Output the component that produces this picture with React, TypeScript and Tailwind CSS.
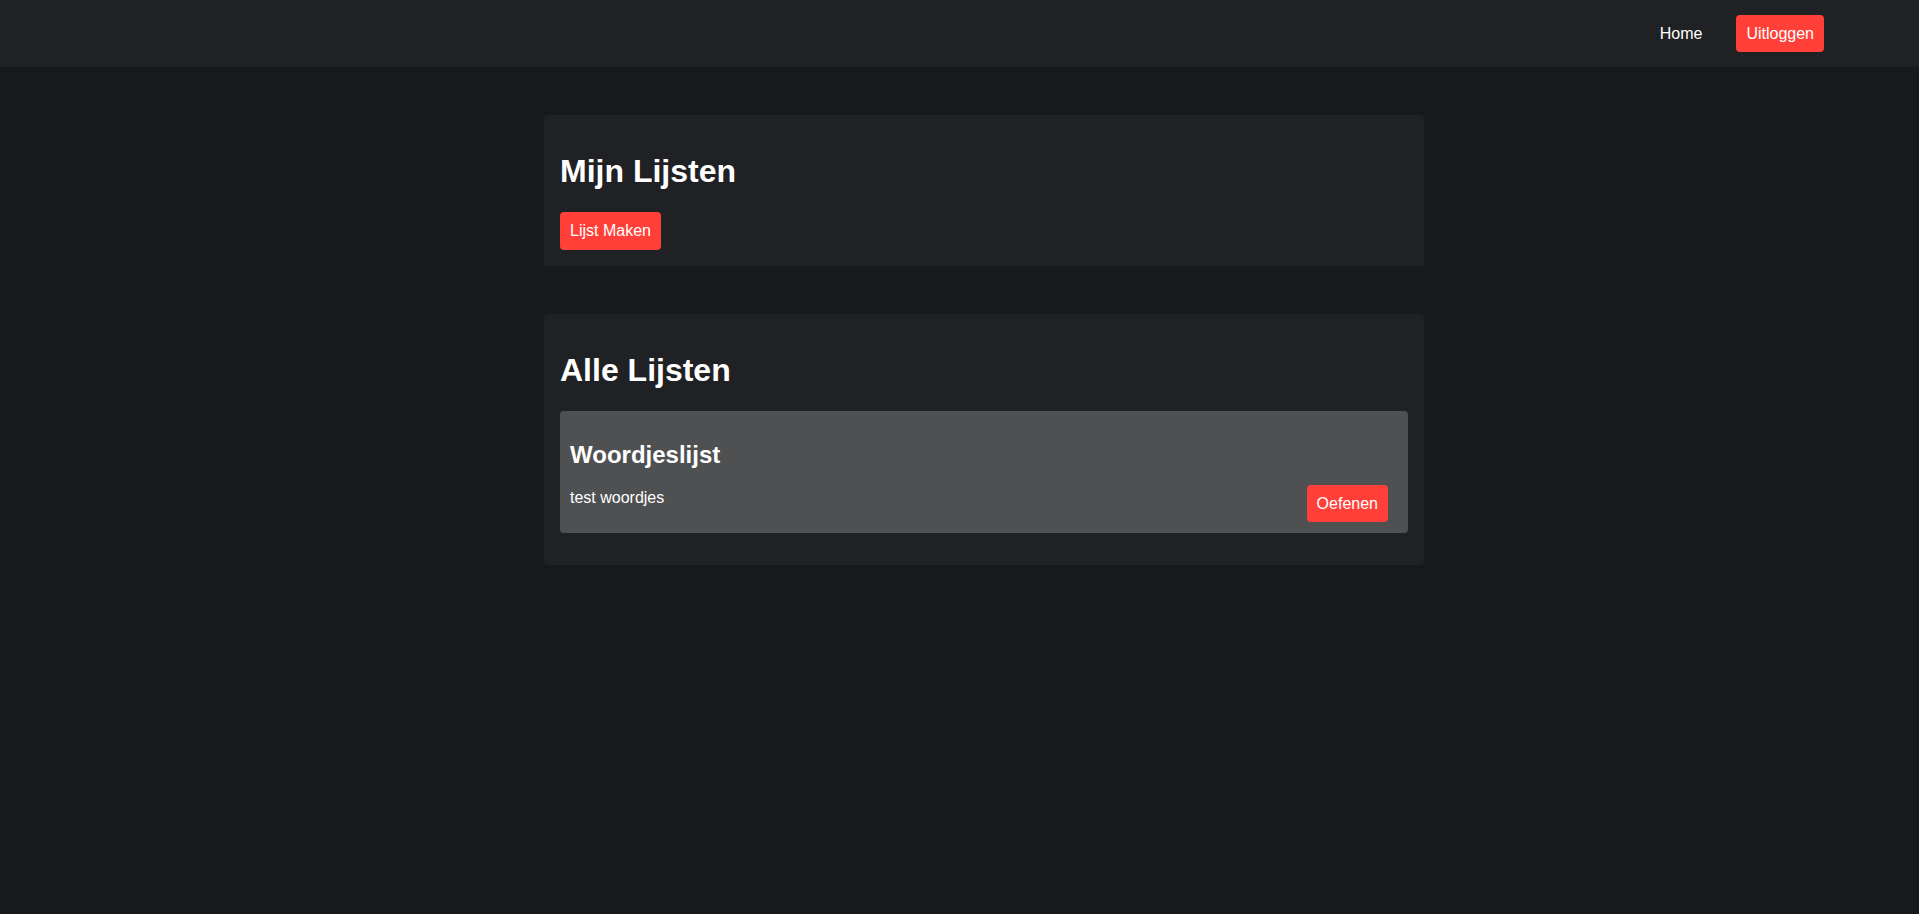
export default function App() {
  const lists = [{ title: "Woordjeslijst", desc: "test woordjes" }];

  return (
    <div className="min-h-[914px] bg-[#18191b] text-white font-['Liberation_Sans',Arial,sans-serif]">
      {/* Navigatie */}
      <header className="h-[67px] bg-[#202124] flex items-center justify-end gap-[34px] pr-[95px]">
        <a className="text-[16px] text-white cursor-pointer">Home</a>
        <button className="h-[37px] px-[10px] rounded-[4px] bg-[#ff3f38] text-[16px] text-white">
          Uitloggen
        </button>
      </header>

      <main className="flex justify-center pl-[49px] pt-[48px]">
        <div className="w-[880px] flex flex-col gap-[48px]">
          {/* Mijn lijsten */}
          <section className="bg-[#202124] rounded-[4px] p-[16px]">
            <h2 className="text-[32px] font-bold leading-[37px] my-[22px]">Mijn Lijsten</h2>
            <button className="h-[38px] px-[10px] rounded-[4px] bg-[#ff3f38] text-[16px] text-white">
              Lijst Maken
            </button>
          </section>

          {/* Alle lijsten */}
          <section className="bg-[#202124] rounded-[4px] p-[16px]">
            <h2 className="text-[32px] font-bold leading-[37px] my-[22px]">Alle Lijsten</h2>
            {lists.map((item) => (
              <div
                key={item.title}
                className="bg-[#4f5052] rounded-[4px] p-[10px] mb-[16px] flex items-end justify-between"
              >
                <div>
                  <h3 className="text-[24px] font-bold leading-[27px] my-[20px]">{item.title}</h3>
                  <p className="text-[16px] leading-[19px] mb-[16px]">{item.desc}</p>
                </div>
                <button className="h-[37px] px-[10px] mr-[10px] mb-[1px] rounded-[4px] bg-[#ff3f38] text-[16px] text-white">
                  Oefenen
                </button>
              </div>
            ))}
          </section>
        </div>
      </main>
    </div>
  );
}
